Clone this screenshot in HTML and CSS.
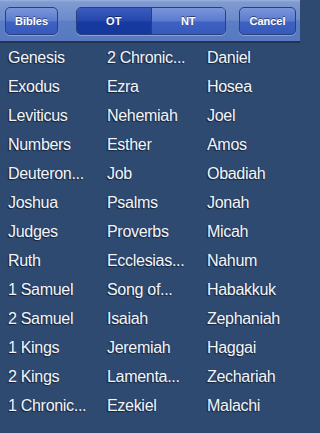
FILE: index.html
```html
<!DOCTYPE html>
<html>
<head>
<meta charset="utf-8">
<link rel="stylesheet" href="styles.css">
</head>
<body>
<div class="toolbar">
  <div class="btn">Bibles</div>
  <div class="seg">
    <div class="seg-item selected">OT</div>
    <div class="seg-item">NT</div>
  </div>
  <div class="btn">Cancel</div>
</div>
<div class="books">
  <div class="book">Genesis</div>
  <div class="book">Exodus</div>
  <div class="book">Leviticus</div>
  <div class="book">Numbers</div>
  <div class="book">Deuteron...</div>
  <div class="book">Joshua</div>
  <div class="book">Judges</div>
  <div class="book">Ruth</div>
  <div class="book">1 Samuel</div>
  <div class="book">2 Samuel</div>
  <div class="book">1 Kings</div>
  <div class="book">2 Kings</div>
  <div class="book">1 Chronic...</div>
  <div class="book">2 Chronic...</div>
  <div class="book">Ezra</div>
  <div class="book">Nehemiah</div>
  <div class="book">Esther</div>
  <div class="book">Job</div>
  <div class="book">Psalms</div>
  <div class="book">Proverbs</div>
  <div class="book">Ecclesias...</div>
  <div class="book">Song of...</div>
  <div class="book">Isaiah</div>
  <div class="book">Jeremiah</div>
  <div class="book">Lamenta...</div>
  <div class="book">Ezekiel</div>
  <div class="book">Daniel</div>
  <div class="book">Hosea</div>
  <div class="book">Joel</div>
  <div class="book">Amos</div>
  <div class="book">Obadiah</div>
  <div class="book">Jonah</div>
  <div class="book">Micah</div>
  <div class="book">Nahum</div>
  <div class="book">Habakkuk</div>
  <div class="book">Zephaniah</div>
  <div class="book">Haggai</div>
  <div class="book">Zechariah</div>
  <div class="book">Malachi</div>
</div>
</body>
</html>
```

FILE: styles.css
```css
html, body {
  margin: 0;
  padding: 0;
}
body {
  width: 300px;
  height: 433px;
  overflow: hidden;
  background: #2f4a71;
  font-family: "Liberation Sans", Arial, sans-serif;
}
.toolbar {
  height: 41px;
  box-sizing: border-box;
  padding: 7px 4px 0 5px;
  display: flex;
  align-items: flex-start;
  background: linear-gradient(to bottom, #9bb1dc 0px, #7f9bd1 2px, #6d8bca 20px, #5c7ec4 21px, #5779c1 41px);
  border-bottom: 2px solid #25324f;
  height: 43px;
}
.btn {
  height: 28px;
  box-sizing: border-box;
  padding: 0 7px;
  border: 1px solid #2b3f7e;
  border-radius: 5px;
  background: linear-gradient(to bottom, #7b96d9 0px, #5a7ad0 13px, #3e62c2 14px, #3558bb 28px);
  box-shadow: 0 1px 0 rgba(180,200,240,0.5);
  color: #fff;
  font-weight: bold;
  font-size: 11px;
  display: flex;
  align-items: center;
  justify-content: center;
  text-shadow: 0 -1px 0 rgba(0,0,0,0.5);
}
.toolbar .btn:first-child { width: 53px; }
.toolbar .btn:last-child { width: 57px; margin-left: auto; }
.seg {
  margin-left: 18px;
  display: flex;
  width: 150px;
  height: 28px;
  box-sizing: border-box;
  border: 1px solid #2b3f7e;
  border-radius: 5px;
  overflow: hidden;
  box-shadow: 0 1px 0 rgba(180,200,240,0.5);
}
.seg-item {
  flex: 1;
  display: flex;
  align-items: center;
  justify-content: center;
  color: #fff;
  font-weight: bold;
  font-size: 11px;
  text-shadow: 0 -1px 0 rgba(0,0,0,0.5);
  background: linear-gradient(to bottom, #7b96d9 0px, #5a7ad0 13px, #3e62c2 14px, #3558bb 28px);
}
.seg-item + .seg-item {
  border-left: 1px solid #2b3f7e;
}
.seg-item.selected {
  background: linear-gradient(to bottom, #3a5bc0 0px, #2546ab 13px, #163aa0 14px, #14389c 28px);
}
.books {
  display: grid;
  grid-auto-flow: column;
  grid-template-rows: repeat(13, 29px);
  grid-template-columns: 99px 100px 93px;
  padding-left: 8px;
}
.book {
  color: #f2f4f8;
  font-size: 16px;
  line-height: 29px;
  letter-spacing: -0.3px;
  white-space: nowrap;
  text-shadow: -1px 1px 1px rgba(0,0,0,0.55);
}
```
